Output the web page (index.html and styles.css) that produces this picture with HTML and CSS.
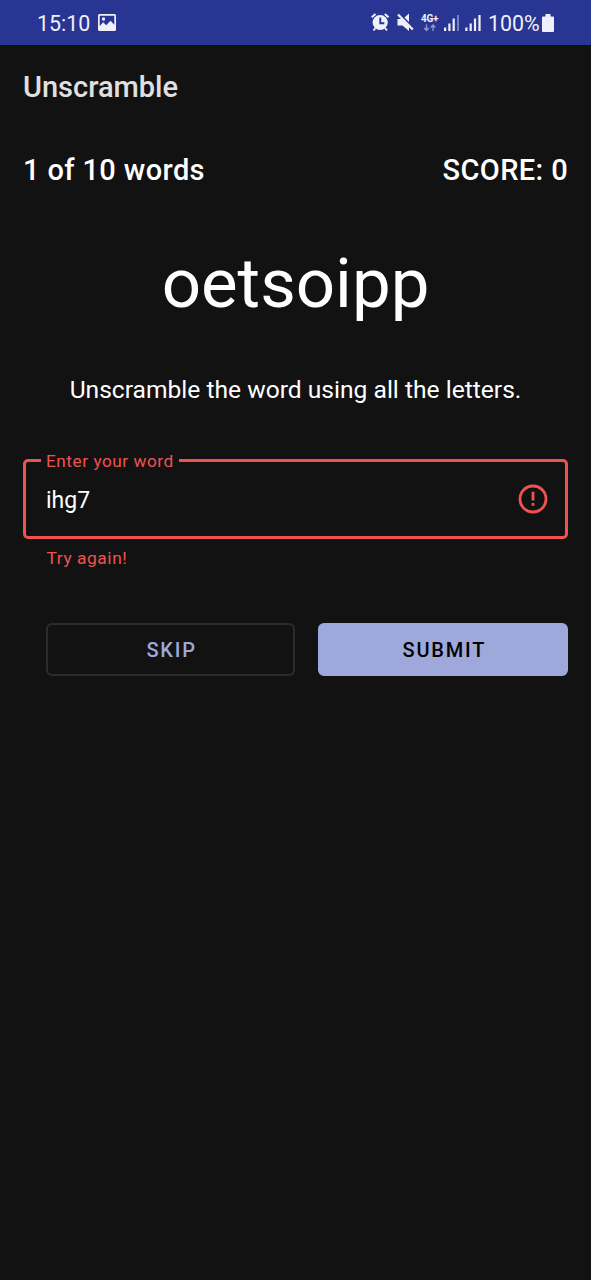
FILE: index.html
```
<!DOCTYPE html>
<html lang="en">
<head>
<meta charset="utf-8">
<title>Unscramble</title>
<link rel="stylesheet" href="styles.css">
</head>
<body>
<div class="status">
  <span class="clock">15:10</span>
  <svg class="photo" width="18" height="17" viewBox="0 0 18 17"><path fill="#f0f0fa" fill-rule="evenodd" d="M1.500 0h15A1.500 1.500 0 0 1 18 1.500v14a1.500 1.500 0 0 1-1.500 1.500h-15A1.500 1.500 0 0 1 0 15.500v-14A1.500 1.500 0 0 1 1.500 0ZM1.700 1.700V12l3.500-3.700 3 2.900 4.300-4.400 3.800 3.900V1.700Z"/><circle cx="5.500" cy="5" r="1.700" fill="#f0f0fa"/></svg>
  <svg class="signs" width="112" height="45" viewBox="370 0 112 45" fill="#f0f0fa">
    <path fill="none" stroke="#f0f0fa" stroke-width="2" d="M371.700 17.300l3.800-3.300M384.800 14l3.800 3.300M375.500 28l-2 2.500M385 28l2 2.500"/>
    <circle cx="380.200" cy="22.500" r="7.600"/>
    <path fill="none" stroke="#283593" stroke-width="1.900" d="M380.300 17.500v5.700h4"/>
    <path d="M397.500 19h4l7.500 7.500V31l-6.500-5.500h-5ZM404.500 17.500l4.500-4v8.500Z"/>
    <path fill="none" stroke="#f0f0fa" stroke-width="2.300" d="M398 14.500l14.800 15"/>
    <text class="network" x="421" y="22.300" textLength="17.500">4G+</text>
    <path fill="none" stroke="#8d96cf" stroke-width="1.400" d="M426.500 24.500v5.500M424.200 28l2.300 2.500 2.300-2.500M433 31v-5.500M430.700 27.500l2.300-2.500 2.300 2.500"/>
    <path d="M444 27.500h2.200V31h-2.200ZM448.300 23.500h2.200V31h-2.200ZM452.600 18.500h2.200V31h-2.200Z"/>
    <path fill="#7780c0" d="M457 15h2v16h-2Z"/>
    <path d="M465.300 27.500h2.200V31h-2.200ZM469.600 23.500h2.200V31h-2.200ZM473.900 18.500h2.200V31h-2.200ZM478.400 15h2.200v16h-2.200Z"/>
  </svg>
  <span class="percent">100%</span>
  <svg class="battery" width="12" height="18" viewBox="0 0 12 18"><path fill="#f0f0fa" d="M3.500 0h5v2.500H11a1 1 0 0 1 1 1V17a1 1 0 0 1-1 1H1a1 1 0 0 1-1-1V3.500a1 1 0 0 1 1-1h2.500Z"/></svg>
</div>
<header class="bar">Unscramble</header>
<main class="game">
  <div class="stats"><span>1 of 10 words</span><span class="score">SCORE: 0</span></div>
  <div class="word">oetsoipp</div>
  <p class="hint">Unscramble the word using all the letters.</p>
  <div class="field">
    <span class="label">Enter your word</span><span class="value">ihg7</span>
    <svg width="30" height="30" viewBox="0 0 30 30"><circle cx="15" cy="15" r="13" fill="none" stroke="#ef5350" stroke-width="2.800"/><path fill="#ef5350" d="M13.600 7.800h2.800v8.700h-2.800ZM13.600 19h2.800v2.800h-2.800Z"/></svg>
  </div>
  <div class="error">Try again!</div>
  <div class="actions"><button class="button">SKIP</button><button class="button filled">SUBMIT</button></div>
</main>
</body>
</html>
```
FILE: styles.css
```
*{box-sizing:border-box}
body{margin:0;background:#121212;color:#fff;font-family:Roboto,sans-serif;height:1280px;overflow:hidden}
.status{height:45px;background:#283593;display:flex;align-items:center;padding:0 37px 0 37px;font-size:21.4px;color:#f0f0fa}
.clock,.percent{line-height:25px;padding-top:1px}
.clock{width:61px}
.signs{margin-left:auto}
.percent{width:54px;padding-left:6px}
.battery{margin-left:6px}
.network{font:700 10px Roboto,sans-serif}
.bar{height:83px;line-height:84px;padding-left:23px;font-size:29px;font-weight:500;color:#e0e0e0}
.game{padding:0 23px}
.stats{display:flex;justify-content:space-between;height:83px;line-height:84px;font-size:29px;font-weight:500;letter-spacing:.38px}
.word{height:145px;line-height:145px;text-align:center;font-size:69px}
.hint{margin:0;height:68px;line-height:67px;text-align:center;font-size:24.600px}
.field{position:relative;margin-top:35px;height:80px;border:3px solid #ef5350;border-radius:5px;padding:0 17px 0 20px;display:flex;align-items:center;justify-content:space-between;font-size:23px}
.value{padding-top:2px}
.label{position:absolute;left:15px;top:-11px;padding:0 5px;background:#121212;color:#ef5350;font-size:17.200px;line-height:20px;letter-spacing:.55px}
.error{padding:9px 24px 8px 23.500px;color:#ef5350;font-size:17.400px;line-height:20px;letter-spacing:.55px}
.actions{display:flex;gap:23px;margin:47px 0 0 22.500px}
.button{flex:1;height:52.500px;border:2px solid #2c2c2c;border-radius:6px;background:none;color:#9fa8da;font:500 20px Roboto,sans-serif;letter-spacing:1.800px;padding:2px 0 0 2.500px}
.filled{background:#9fa8da;border-color:#9fa8da;color:#000}
```
